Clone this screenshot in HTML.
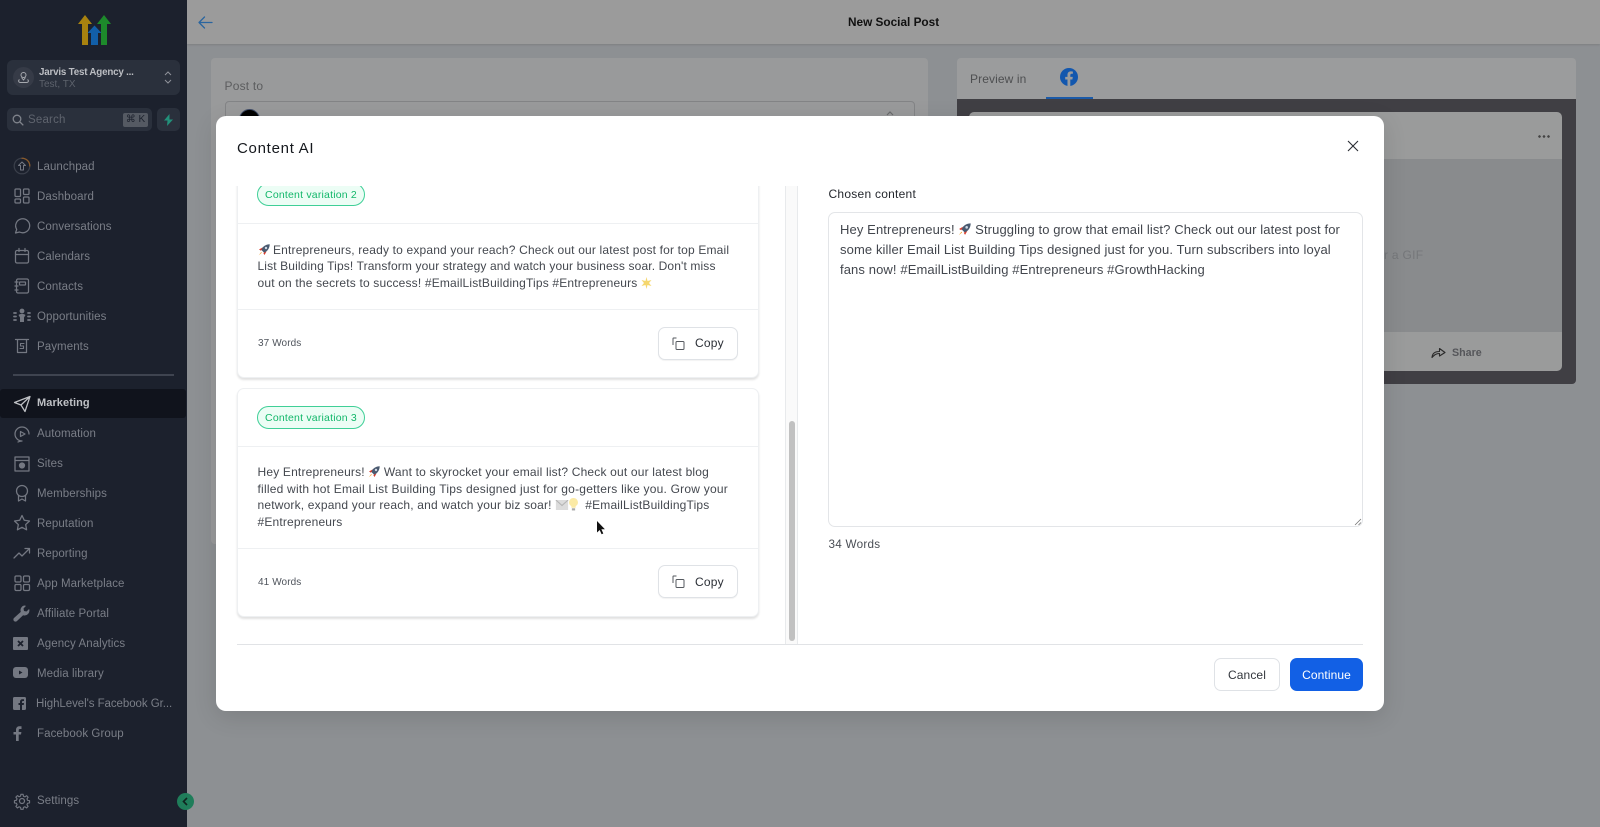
<!DOCTYPE html>
<html lang="en"><head><meta charset="utf-8"><title>New Social Post</title>
<style>
html,body{margin:0;padding:0;width:1600px;height:827px;overflow:hidden;background:#8d9093;font-family:"Liberation Sans",sans-serif}
*{box-sizing:border-box}
#w{position:absolute;left:0;top:0;width:1600px;height:827px;overflow:hidden;filter:blur(.3px)}
.a{position:absolute}
.t{position:absolute;white-space:nowrap;line-height:16px;height:16px}
.side{position:absolute;left:0;top:0;width:187px;height:827px;background:#1c212d}
.n{position:absolute;left:37px;font-size:11.5px;line-height:16px;color:#7a7e87;letter-spacing:.08px;white-space:nowrap}
.i{position:absolute;left:13px;width:18px;height:18px;fill:none;stroke:#747882;stroke-width:1.25;stroke-linecap:round;stroke-linejoin:round}
.card{position:absolute;left:237px;width:522px;background:#fff;border:1px solid #eef0f2;border-radius:7px;box-shadow:0 2px 2px rgba(0,0,0,.12)}
.hr{position:absolute;height:1px;background:#eef0f2}
.pill{position:absolute;left:257px;width:108px;height:23px;border:1px solid #3fcf97;background:#ecfdf5;border-radius:12px;color:#12b76a;font-size:10.5px;line-height:22.5px;text-align:center;letter-spacing:.2px;white-space:nowrap}
.b{font-size:12px;color:#44484f;letter-spacing:.13px}
.w{font-size:10px;color:#4f545c;letter-spacing:.1px}
.copy{position:absolute;left:658px;width:80px;height:33px;background:#fff;border:1px solid #dfe2e6;border-radius:7px;box-shadow:0 1px 1px rgba(0,0,0,.05)}
.copy span{position:absolute;left:36px;top:7.5px;font-size:12px;line-height:16px;color:#2b2f36;letter-spacing:.2px}
.copy svg{position:absolute;left:13px;top:9px}
.e{display:inline-block;vertical-align:-2px}
.c{font-size:13px;color:#42464d;letter-spacing:.11px;line-height:20px;height:20px}
</style></head><body><div id="w">

<!-- background page -->
<div class="a" style="left:187px;top:0;width:1413px;height:44px;background:#9b9b9b;box-shadow:0 1px 2px rgba(0,0,0,.12)"></div>
<svg class="a" style="left:197px;top:14.500px" width="16" height="15" viewBox="0 0 16 15" fill="none" stroke="#2a659f" stroke-width="1.300" stroke-linecap="round" stroke-linejoin="round"><path d="M15 7.500H2M7.500 2 2 7.500 7.500 13"/></svg>
<div class="t" style="left:848px;top:14px;font-size:11.800px;font-weight:700;color:#111;">New Social Post</div>

<div class="a" style="left:211px;top:58px;width:717px;height:486px;background:#999a9b;border-radius:4px"></div>
<div class="t" style="left:224.500px;top:77.500px;font-size:12px;color:#5c5d5f;letter-spacing:.2px">Post to</div>
<div class="a" style="left:225px;top:101px;width:690px;height:40px;border:1px solid #838486;border-radius:4px"></div>
<div class="a" style="left:239px;top:109px;width:21px;height:21px;border-radius:50%;background:#000;border:1px solid #3d4a66"></div>
<svg class="a" style="left:884px;top:111px" width="12" height="8" viewBox="0 0 12 8" fill="none" stroke="#6a6b6d" stroke-width="1.200"><path d="M3 4 6 1l3 3"/></svg>

<div class="a" style="left:957px;top:58px;width:619px;height:41px;background:#9b9c9d;border-radius:4px 4px 0 0"></div>
<div class="t" style="left:970px;top:70.500px;font-size:12px;color:#4e4f51;letter-spacing:.1px">Preview in</div>
<svg class="a" style="left:1060px;top:68px" width="18" height="18" viewBox="0 0 18 18"><circle cx="9" cy="9" r="9" fill="#1257ae"/><path d="M12.400 11.500l.4-2.600h-2.500V7.200c0-.7.35-1.400 1.450-1.400h1.130V3.600s-1-.18-2-.18c-2.050 0-3.400 1.250-3.400 3.500v2H5.200v2.600h2.280V18h2.820v-6.500z" fill="#9b9c9d"/></svg>
<div class="a" style="left:1046px;top:97px;width:47px;height:2px;background:#1b5aa8"></div>
<div class="a" style="left:957px;top:99px;width:619px;height:285px;background:#403f44;border-radius:0 0 4px 4px"></div>
<div class="a" style="left:969px;top:112px;width:593px;height:259px;background:#9a9b9b;border-radius:5px;overflow:hidden">
  <div class="a" style="left:0;top:47px;width:593px;height:173px;background:#898b8d"></div>
</div>
<div class="a" style="left:1538px;top:134.500px;width:12px;height:3px;background:radial-gradient(circle at 1.500px 1.500px,#444 1.200px,transparent 1.400px) 0 0/4.500px 3px repeat-x"></div>
<div class="t" style="left:1384px;top:246.500px;font-size:12px;color:#75777a;letter-spacing:.3px">r a GIF</div>
<svg class="a" style="left:1431px;top:345px" width="15" height="14" viewBox="0 0 15 14" fill="none" stroke="#2a2a2a" stroke-width="1.100" stroke-linejoin="round"><path d="M1 12.500C1.300 8.500 4 6.500 8.500 6.500V3.500l5.500 4-5.500 3.500V8.500C5 8.500 3.500 9.800 1 12.500z"/></svg>
<div class="t" style="left:1452px;top:344.500px;font-size:10.700px;font-weight:700;color:#55565a">Share</div>

<!-- sidebar -->
<div class="side">
  <svg class="a" style="left:77px;top:14px" width="35" height="33" viewBox="0 0 35 33">
    <path d="M8 1l7 9h-4v21H5V10H1z" fill="#a8820f"/>
    <path d="M27 1l7 9h-4v21h-6V10h-4z" fill="#1d8a2b"/>
    <path d="M17.500 11.500l7 7.500h-3.500v12h-7V19h-3.500z" fill="#125fa8"/>
  </svg>
  <div class="a" style="left:7px;top:60px;width:173px;height:35px;background:#2a303c;border-radius:6px"></div>
  <div class="a" style="left:13px;top:67px;width:21px;height:21px;background:#363b47;border-radius:50%"></div>
  <svg class="a" style="left:17px;top:71px" width="13" height="13" viewBox="0 0 13 13" fill="none" stroke="#a6a9af" stroke-width="1"><circle cx="6.500" cy="4" r="2.500"/><path d="M4.500 6.500 6.500 9l2-2.500M2.500 8.500c-1.500 1-1 3 1 3h6c2 0 2.500-2 1-3"/></svg>
  <div class="t" style="left:39px;top:64.500px;font-size:9.800px;font-weight:700;color:#bcbec3;letter-spacing:-.2px">Jarvis Test Agency ...</div>
  <div class="t" style="left:39px;top:77px;font-size:10px;color:#5d626c">Test, TX</div>
  <svg class="a" style="left:163px;top:70px" width="10" height="15" viewBox="0 0 10 15" fill="none" stroke="#8f929a" stroke-width="1"><path d="M2 5l3-3 3 3M2 10l3 3 3-3"/></svg>

  <div class="a" style="left:7px;top:108px;width:145px;height:23px;background:#2a303c;border-radius:5px"></div>
  <svg class="a" style="left:12px;top:114px" width="12" height="12" viewBox="0 0 12 12" fill="none" stroke="#80848c" stroke-width="1.300"><circle cx="5" cy="5" r="3.800"/><path d="M8 8l3.300 3.300"/></svg>
  <div class="t" style="left:28px;top:111.500px;font-size:11.500px;color:#5f646e;letter-spacing:.2px">Search</div>
  <div class="a" style="left:123px;top:113px;width:25px;height:14px;background:#555a63;border-radius:2px;color:#1c212d;font-size:10px;line-height:14px;text-align:center;white-space:nowrap">⌘ K</div>
  <div class="a" style="left:157px;top:108px;width:23px;height:23px;background:#2a303c;border-radius:5px"></div>
  <svg class="a" style="left:163px;top:114px" width="11" height="12" viewBox="0 0 11 12"><path d="M6.500 0 1 6.500h3.500L4 12l6-6.500H6.500z" fill="#22907a"/></svg>

  <svg class="i" style="top:157px" viewBox="0 0 18 18"><circle cx="9" cy="9" r="7.800" stroke="#3a3f4a"/><path d="M9 1.200A7.800 7.800 0 0 1 16.800 9" stroke="#8a5a2a"/><path d="M9 5 5.500 8.500H7.500V13h3V8.500h2z" stroke-width="1"/></svg>
  <div class="n" style="top:158.500px">Launchpad</div>
  <svg class="i" style="top:187px" viewBox="0 0 18 18"><rect x="2" y="2" width="5.500" height="7.500" rx="1"/><rect x="10.500" y="2" width="5.500" height="5.500" rx="1"/><rect x="2" y="12" width="5.500" height="4" rx="1"/><rect x="10.500" y="10" width="5.500" height="6" rx="1"/></svg>
  <div class="n" style="top:188.500px">Dashboard</div>
  <svg class="i" style="top:217px" viewBox="0 0 18 18"><path d="M2.500 16l1.200-3.600A7 7 0 1 1 6.500 15z"/></svg>
  <div class="n" style="top:218.500px">Conversations</div>
  <svg class="i" style="top:247px" viewBox="0 0 18 18"><rect x="2.500" y="3.500" width="13" height="12.500" rx="1.500"/><path d="M2.500 7.500h13M6 1.500v3M12 1.500v3"/></svg>
  <div class="n" style="top:248.500px">Calendars</div>
  <svg class="i" style="top:277px" viewBox="0 0 18 18"><rect x="3.500" y="2" width="12" height="14" rx="1.500"/><rect x="6.500" y="5" width="6" height="3" rx=".5"/><path d="M2 5h3M2 9h3M2 13h3"/></svg>
  <div class="n" style="top:278.500px">Contacts</div>
  <svg class="i" style="top:307px" viewBox="0 0 18 18"><circle cx="9" cy="4" r="1.800" fill="#747882"/><path d="M5.500 8c2-1.500 5-1.500 7 0L11 10.500V15H7v-4.500z" fill="#747882" stroke="none"/><path d="M1 6h2M1 9.500h2M1 13h2M15 6h2M15 9.500h2M15 13h2" stroke-width="1.800"/></svg>
  <div class="n" style="top:308.500px">Opportunities</div>
  <svg class="i" style="top:337px" viewBox="0 0 18 18"><path d="M2.500 2.500h13M4.500 2.500v13h9v-13"/><path d="M11 6.500H7.500v2.500H10.500v2.500H7" stroke-width="1.100"/></svg>
  <div class="n" style="top:338.500px">Payments</div>

  <div class="a" style="left:13px;top:374px;width:161px;height:2px;background:#3f4450"></div>

  <div class="a" style="left:0;top:389px;width:186px;height:29px;background:#10131c;border-radius:3px"></div>
  <svg class="i" style="top:395px;stroke:#bfc1c5" viewBox="0 0 18 18"><path d="M1.500 7.500 17 1.500 12 16.500 8 10zM8 10 17 1.500"/></svg>
  <div class="n" style="top:395px;color:#bfc1c5;font-weight:700;font-size:11px">Marketing</div>
  <svg class="i" style="top:425px" viewBox="0 0 18 18"><path d="M16 9A7 7 0 1 0 9 16c-1.500 0-3 .5-4 1"/><path d="M7.500 6.500 12 9l-4.500 2.500z"/></svg>
  <div class="n" style="top:425.500px">Automation</div>
  <svg class="i" style="top:455px" viewBox="0 0 18 18"><rect x="2" y="2" width="14" height="14"/><path d="M2 5.500h14"/><circle cx="9" cy="10.500" r="2.500" fill="#747882"/></svg>
  <div class="n" style="top:455.500px">Sites</div>
  <svg class="i" style="top:484px" viewBox="0 0 18 18"><circle cx="9" cy="7" r="5.500"/><path d="M5.500 11.500V17L9 15l3.500 2v-5.500"/></svg>
  <div class="n" style="top:485.500px">Memberships</div>
  <svg class="i" style="top:514px" viewBox="0 0 18 18"><path d="M9 1.500l2.300 4.800 5.200.7-3.800 3.600.9 5.200L9 13.300l-4.600 2.500.9-5.200L1.500 7l5.200-.7z"/></svg>
  <div class="n" style="top:515.500px">Reputation</div>
  <svg class="i" style="top:544px" viewBox="0 0 18 18"><path d="M1 14l5-5 3 3 7-7M12 4.500h4.500V9"/></svg>
  <div class="n" style="top:545.500px">Reporting</div>
  <svg class="i" style="top:574px" viewBox="0 0 18 18"><rect x="2" y="2" width="6" height="6" rx="1.200"/><rect x="10.500" y="2" width="6" height="6" rx="1.200"/><rect x="2" y="10.500" width="6" height="6" rx="1.200"/><rect x="10.500" y="10.500" width="6" height="6" rx="1.200"/></svg>
  <div class="n" style="top:575.500px">App Marketplace</div>
  <svg class="i" style="top:604px;fill:#747882;stroke:none" viewBox="0 0 18 18"><path d="M11 1.500a5 5 0 0 1 2 .4L10.500 4.500l.5 2.500 2.500.5 2.600-2.500a4.800 4.800 0 0 1-6 6.200L4 17a2 2 0 0 1-3-3l6.800-6.100A4.900 4.900 0 0 1 11 1.500z"/></svg>
  <div class="n" style="top:605.500px">Affiliate Portal</div>
  <svg class="a" style="left:13px;top:637px" width="15" height="13" viewBox="0 0 15 13"><rect width="15" height="13" rx="1" fill="#747882"/><path d="M5 4l5 5M10 4 5 9" stroke="#1c212d" stroke-width="1.800"/></svg>
  <div class="n" style="top:635.500px">Agency Analytics</div>
  <svg class="a" style="left:13px;top:667px" width="15" height="11" viewBox="0 0 15 11"><rect width="15" height="11" rx="3" fill="#747882"/><path d="M6 3.500v4L9.500 5.500z" fill="#1c212d"/></svg>
  <div class="n" style="top:665.500px">Media library</div>
  <svg class="a" style="left:13px;top:697px" width="13" height="13" viewBox="0 0 13 13"><rect width="13" height="13" rx="1.500" fill="#747882"/><path d="M9 13V8h1.700l.3-2H9V5c0-.6.3-1 1-1h1V2.300H9.500C8 2.300 7 3.300 7 4.800V6H5.500v2H7v5z" fill="#1c212d"/></svg>
  <div class="n" style="top:695.500px;left:36px;letter-spacing:-.06px">HighLevel's Facebook Gr...</div>
  <svg class="a" style="left:13px;top:726px" width="9" height="15" viewBox="0 0 9 15"><path d="M3 15V8.500H.5V6H3V4c0-2.400 1.400-3.700 3.500-3.700H8.500V3H7c-1 0-1.300.6-1.300 1.300V6h2.700l-.4 2.500H5.700V15z" fill="#747882"/></svg>
  <div class="n" style="top:725.500px">Facebook Group</div>
  <svg class="i" style="top:792px" viewBox="0 0 18 18"><circle cx="9" cy="9" r="2.500"/><path d="M7.800 1.500h2.400l.4 2.200 1.600.7 1.900-1.300 1.700 1.700-1.300 1.900.7 1.600 2.200.4v2.400l-2.200.4-.7 1.600 1.300 1.900-1.700 1.700-1.900-1.300-1.600.7-.4 2.200H7.800l-.4-2.200-1.600-.7-1.900 1.300-1.700-1.700 1.300-1.900-.7-1.600-2.200-.4V8.600l2.200-.4.700-1.600-1.300-1.900 1.700-1.700 1.900 1.300 1.600-.7z" transform="translate(.9 .9) scale(.9)"/></svg>
  <div class="n" style="top:792.500px">Settings</div>
</div>
<div class="a" style="left:177px;top:793px;width:17px;height:17px;border-radius:50%;background:#1f7d5a"></div>
<svg class="a" style="left:181px;top:797px" width="9" height="9" viewBox="0 0 9 9" fill="none" stroke="#10241f" stroke-width="1.600"><path d="M6 1 2.500 4.500 6 8"/></svg>

<!-- modal -->
<div class="a" style="left:216px;top:116px;width:1167.500px;height:595px;background:#fff;border-radius:10px;box-shadow:0 6px 24px rgba(0,0,0,.12)"></div>
<div class="t" style="left:237px;top:140.500px;font-size:15px;color:#15181d;letter-spacing:.72px">Content AI</div>
<svg class="a" style="left:1347px;top:140px" width="12" height="12" viewBox="0 0 12 12" fill="none" stroke="#2a2d33" stroke-width="1.100"><path d="M1 1l10 10M11 1 1 11"/></svg>

<div class="a" style="left:225px;top:186px;width:545px;height:458px;overflow:hidden">
  <div class="card" style="left:12px;top:-60px;height:252px"></div>
  <div class="pill" style="left:32px;top:-3px">Content variation 2</div>
  <div class="hr" style="left:12px;top:37px;width:522px"></div>
  <div class="hr" style="left:12px;top:123px;width:522px"></div>
  <div class="card" style="left:12px;top:202px;height:229px"></div>
  <div class="pill" style="left:32px;top:220px">Content variation 3</div>
  <div class="hr" style="left:12px;top:260px;width:522px"></div>
  <div class="hr" style="left:12px;top:362px;width:522px"></div>
</div>

<div class="t b" style="left:257.500px;top:241.500px;letter-spacing:.17px"><svg class="e" width="12" height="12" viewBox="0 0 12 12"><path d="M11.700.3C8 .3 4.800 2.300 3.200 5.800L6.200 8.800C9.700 7.200 11.700 4 11.700.3z" fill="#4a5a70"/><circle cx="8" cy="4" r="1.200" fill="#cfd8e3"/><path d="M4.500 3.500 1 5.500l2 1.200zM8.500 7.500 6.500 11l-1.200-2z" fill="#d93a2b"/><path d="M3.200 8 .8 11.200l3-2.400z" fill="#f2a02d"/></svg> Entrepreneurs, ready to expand your reach? Check out our latest post for top Email</div>
<div class="t b" style="left:257.500px;top:258px">List Building Tips! Transform your strategy and watch your business soar. Don't miss</div>
<div class="t b" style="left:257.500px;top:275px;letter-spacing:.17px">out on the secrets to success! #EmailListBuildingTips #Entrepreneurs <svg class="e" width="11" height="12" viewBox="0 0 11 12"><path d="M5.500 0l1 4 4-1-2.500 3 2.500 3-4-1-1 4-1-4-4 1L3 6 .5 3l4 1z" fill="#f5d76e"/></svg></div>
<div class="t w" style="left:258px;top:335.500px">37 Words</div>
<div class="copy" style="top:326.500px"><svg width="13" height="13" viewBox="0 0 13 13" fill="none" stroke="#55595f" stroke-width="1"><path d="M4 1.500V1H1.500A.7.700 0 0 0 1 1.500V8"/><rect x="4" y="4.500" width="8" height="8" rx="1"/></svg><span>Copy</span></div>

<div class="t b" style="left:257.500px;top:464px;letter-spacing:.18px">Hey Entrepreneurs! <svg class="e" width="12" height="12" viewBox="0 0 12 12"><path d="M11.700.3C8 .3 4.800 2.300 3.200 5.800L6.200 8.800C9.700 7.200 11.700 4 11.700.3z" fill="#4a5a70"/><circle cx="8" cy="4" r="1.200" fill="#cfd8e3"/><path d="M4.500 3.500 1 5.500l2 1.200zM8.500 7.500 6.500 11l-1.200-2z" fill="#d93a2b"/><path d="M3.200 8 .8 11.200l3-2.400z" fill="#f2a02d"/></svg> Want to skyrocket your email list? Check out our latest blog</div>
<div class="t b" style="left:257.500px;top:481px;letter-spacing:.22px">filled with hot Email List Building Tips designed just for go-getters like you. Grow your</div>
<div class="t b" style="left:257.500px;top:497px;letter-spacing:.18px">network, expand your reach, and watch your biz soar! <svg class="e" width="14" height="10" viewBox="0 0 11 9" style="vertical-align:-1px"><rect width="11" height="9" fill="#dcdcdc"/><path d="M0 0l5.500 5L11 0" fill="none" stroke="#b5b5b5"/></svg><svg class="e" width="9" height="13" viewBox="0 0 8 12"><path d="M4 0a4 4 0 0 1 2 7.500V9H2V7.500A4 4 0 0 1 4 0z" fill="#fbeaa5"/><rect x="2.500" y="9.500" width="3" height="2" fill="#aaa"/></svg> &nbsp;#EmailListBuildingTips</div>
<div class="t b" style="left:257.500px;top:513.500px;letter-spacing:.16px">#Entrepreneurs</div>
<div class="t w" style="left:258px;top:574.500px">41 Words</div>
<div class="copy" style="top:565px"><svg width="13" height="13" viewBox="0 0 13 13" fill="none" stroke="#55595f" stroke-width="1"><path d="M4 1.500V1H1.500A.7.700 0 0 0 1 1.500V8"/><rect x="4" y="4.500" width="8" height="8" rx="1"/></svg><span>Copy</span></div>

<svg class="a" style="left:594px;top:520px" width="13" height="17" viewBox="0 0 13 17"><path d="M3 1v11.500l2.700-2.500 1.900 4.300 1.700-.8-1.900-4.200h3.500z" fill="#111"/></svg>

<!-- scroll track -->
<div class="a" style="left:785px;top:186px;width:13px;height:458px;border-left:1px solid #e8eaec;border-right:1px solid #e8eaec;background:#fafafa"></div>
<div class="a" style="left:788.500px;top:421px;width:6.500px;height:220px;background:#c1c1c1;border-radius:3px"></div>

<!-- right column -->
<div class="t" style="left:828.500px;top:185.500px;font-size:12px;color:#25282e;letter-spacing:.25px">Chosen content</div>
<div class="a" style="left:828px;top:212px;width:535px;height:315px;background:#fff;border:1px solid #e3e5e8;border-radius:7px"></div>
<svg class="a" style="left:1354px;top:518px" width="8" height="8" viewBox="0 0 8 8" stroke="#777" stroke-width=".8"><path d="M1 7l6-6M4.500 7 7 4.500"/></svg>
<div class="t c" style="left:840px;top:219.500px">Hey Entrepreneurs! <svg class="e" width="13" height="13" viewBox="0 0 12 12"><path d="M11.700.3C8 .3 4.800 2.300 3.200 5.800L6.200 8.800C9.700 7.200 11.700 4 11.700.3z" fill="#4a5a70"/><circle cx="8" cy="4" r="1.200" fill="#cfd8e3"/><path d="M4.500 3.500 1 5.500l2 1.200zM8.500 7.500 6.500 11l-1.200-2z" fill="#d93a2b"/><path d="M3.200 8 .8 11.200l3-2.400z" fill="#f2a02d"/></svg> Struggling to grow that email list? Check out our latest post for</div>
<div class="t c" style="left:840px;top:239.500px">some killer Email List Building Tips designed just for you. Turn subscribers into loyal</div>
<div class="t c" style="left:840px;top:259.500px">fans now! #EmailListBuilding #Entrepreneurs #GrowthHacking</div>
<div class="t" style="left:828.500px;top:536.500px;font-size:11.700px;color:#4a4e55;letter-spacing:.25px">34 Words</div>

<div class="hr" style="left:237px;top:644px;width:1126px;background:#e1e3e6"></div>
<div class="a" style="left:1214px;top:658px;width:66px;height:33px;background:#fff;border:1px solid #dfe2e6;border-radius:7px;font-size:12px;line-height:32px;text-align:center;color:#33373d;letter-spacing:.1px">Cancel</div>
<div class="a" style="left:1290px;top:658px;width:73px;height:33px;background:#1260e5;border-radius:7px;font-size:12px;line-height:34px;text-align:center;color:#fff;letter-spacing:.1px">Continue</div>

</div></body></html>
